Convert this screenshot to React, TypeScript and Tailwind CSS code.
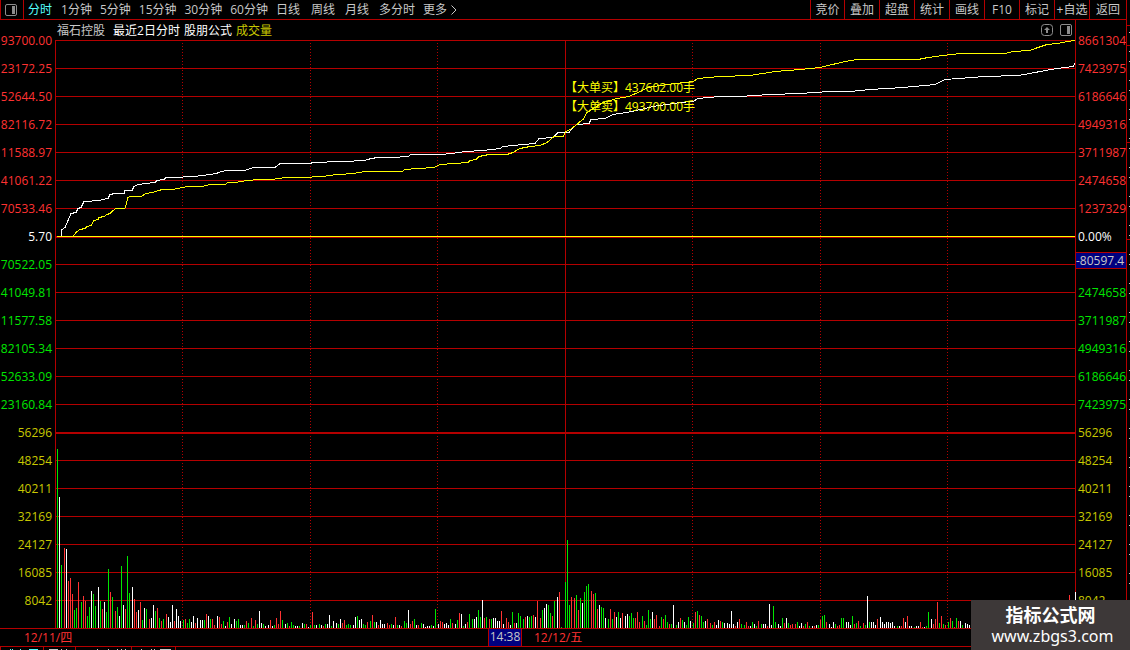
const periods = ["1分钟", "5分钟", "15分钟", "30分钟", "60分钟", "日线"];
const longPeriods = ["周线", "月线", "多分时"];
const tools = ["叠加", "超盘", "统计", "画线", "F10", "标记", "+自选"];

const RED = "text-[#ff3232]";
const GREEN = "text-[#00e600]";
const YELLOW = "text-[#c8c800]";

const leftAxis = [
  { color: RED, values: ["93700.00", "23172.25", "52644.50", "82116.72", "11588.97", "41061.22", "70533.46"] },
  { color: "text-white", values: ["5.70"] },
  { color: GREEN, values: ["70522.05", "41049.81", "11577.58", "82105.34", "52633.09", "23160.84"] },
  { color: YELLOW, values: ["56296", "48254", "40211", "32169", "24127", "16085", "8042"] },
];

const rightAxis = [
  { color: RED, values: ["8661304", "7423975", "6186646", "4949316", "3711987", "2474658", "1237329"] },
  { color: "text-white", values: ["0.00%"] },
  { color: "cursor", values: ["-80597.4"] },
  { color: GREEN, values: ["2474658", "3711987", "4949316", "6186646", "7423975"] },
  { color: YELLOW, values: ["56296", "48254", "40211", "32169", "24127", "16085", "8042"] },
];

// one token per minute: colour (g/r/w) followed by bar height
const volume = `
g179 w131 g63 r80 w79 r47 r50 r34 g18 g20 r46 g26 r32 r27 g12 g21 w37 g34 g22 w41
g27 r19 w26 g16 g59 r36 g31 r17 g21 w12 g62 w23 r19 g72 g35 w41 r29 r16 w18 r26
g8 w20 g19 r9 w10 w23 g17 r20 g10 r7 g9 r14 w11 w6 w23 r7 w19 w12 w7 g8
r9 g5 g9 w6 w12 r5 w10 w8 w8 g8 r14 w12 g9 r9 r3 w12 r11 r4 g7 w2
r6 g11 w4 w9 g7 g9 w3 w3 g3 r7 g5 r10 g2 r8 g4 w17 w5 g4 w2 w3
r8 w2 g3 r10 r4 r17 g8 w4 g5 r2 g6 g3 w2 w2 g2 w5 g4 r4 w1 g3
r16 g3 w3 g4 w3 r2 g4 w4 w13 g2 w7 w5 g4 w9 r5 r8 g3 g4 g3 w3
w11 g12 w8 w9 g4 g3 r6 g7 r13 g6 w6 r3 w8 w4 w4 r5 r3 g4 w3 r11
g3 w3 r2 g7 g5 w18 r4 r7 g9 w3 r3 g5 w4 w1 w2 w2 g3 w2 g19 w4
r7 r6 w4 w5 w3 g9 r5 w4 g8 r15 w14 g2 w4 r6 g14 g9 w9 w11 g18 g11
w28 r10 g11 r9 g9 w10 w10 w7 w7 r17 w4 r10 r6 w3 g16 r5 w5 g15 g12 g9
r11 w12 g11 g12 r13 w11 r27 r10 g18 w20 w24 g23 g15 r12 g27 w31 r36 g1 g0 g46
g88 g23 r31 r30 g33 r18 g30 w25 g36 g42 g44 r37 r34 g35 r19 w23 g21 g20 w10 g9
r19 g9 r16 w11 g16 w10 r15 w12 w14 g12 g15 g10 r10 r16 r6 g12 r7 g3 g18 g9
w16 r9 r13 r2 g11 r9 g13 g6 r4 g4 w23 g3 w6 r10 g8 w6 g3 g11 w7 g5
r16 g17 r13 g12 g6 w7 r9 r5 g3 r6 w3 w8 r7 g6 w5 w5 w4 w17 w4 r2
w6 r9 g4 g3 r6 r2 w2 g6 w4 g2 r7 g4 w4 w4 r2 w24 w3 g22 g6 w4
w2 g10 r5 w10 g5 r3 r4 r4 g6 w2 w5 r2 g4 r6 g2 w2 r2 w3 g3 r8
g12 g13 r6 w4 w1 w6 g4 r2 r3 g10 g10 w6 w6 w3 g12 r4 g5 r7 g2 r5
g3 w32 g6 w6 w6 w3 r9 w11 w6 w4 w6 w6 w5 w6 w2 g2 w2 r2 r10 w6
r12 w2 w2 g1 w2 w2 r6 r1 w1 g2 g16 w9 r4 r9 r26 g5 r12 g4 r3 g6
r10 g7 r1 g10 r7 w7 g3 w5 w4 w3 w2 g3 r4 w2 g5 w3 r2 w4 g3 w2
r5 g3 w4 w2 g6 r3 w3 g2 w4 r5 g3 w2 w3 g4 r3 w5 g2 w3 r4 g3
w4 r3 g5 w4 r6 g4 w5 r4 w6 g5 r7 w4 g6 w5 r8 g6 r33 g0 w0 w36`
  .trim()
  .split(/\s+/);

const whiteLine =
  "61,236 62,229 65,227 68,220 71,213 76,212 78,208 81,207 84,201 100,200 102,199 108,198 110,194 115,193 124,193 125,190 132,190 134,186 138,184 146,183 155,182 157,180 164,179 166,177 173,177 193,176 203,175 210,174 217,173 218,172 226,170 245,170 253,167 275,167 280,163 311,163 312,162 343,161 365,160 367,159 377,157 393,157 408,156 411,154 440,154 452,153 466,151 483,150 500,148 503,146 513,145 535,143 539,138 553,137 558,132 569,132 573,127 577,124 589,123 591,119 605,118 613,114 627,112 645,108 653,106 680,102 693,101 698,98 720,96 740,96 770,94 800,93 830,91 850,91 870,89 903,87 935,84 945,79 985,76 1018,75 1030,73 1040,71 1057,68 1073,66 1075,63";

const yellowLine =
  "73,236 76,232 80,229 85,228 87,226 91,225 94,220 98,219 99,217 104,216 107,214 110,213 112,211 116,208 125,208 128,197 130,196 141,196 146,193 153,192 158,190 163,189 173,189 187,186 202,186 210,184 225,184 228,182 235,182 247,180 260,179 272,179 285,177 302,177 323,176 337,174 355,173 357,172 367,171 402,171 405,169 418,168 434,167 440,164 455,163 468,162 470,160 476,159 479,156 489,154 507,154 513,152 520,148 530,146 540,145 547,142 554,136 563,136 566,131 570,129 577,124 580,121 583,119 587,112 595,107 603,102 617,98 629,96 640,91 648,87 667,84 693,81 698,78 720,76 750,75 775,71 800,69 820,67 845,61 857,59 918,59 928,57 943,55 960,53 1005,53 1013,51 1030,50 1035,48 1047,44 1058,43 1067,41 1075,40";

const barPath = (color: string) =>
  volume
    .map((bar, i) => {
      const height = Number(bar.slice(1));
      if (bar[0] !== color || height === 0) return "";
      return `M${Math.floor(57.625 + i * 2.125) + 0.5} 628v${-height}`;
    })
    .join("");

const gridRows = Array.from({ length: 21 }, (_, i) => 40.5 + i * 28);

function PanelIcon() {
  return (
    <svg width="12" height="12" viewBox="0 0 12 12" fill="none" stroke="#8c8c8c">
      <rect x="0.5" y="0.5" width="11" height="11" rx="1.5" />
      <path d="M7 2h3v8H7z" fill="#8c8c8c" stroke="none" />
    </svg>
  );
}

function Chart() {
  return (
    <div className="relative">
      <svg
        className="relative block h-[589px] w-full overflow-visible"
        viewBox="55 40 1020 589"
        preserveAspectRatio="none"
        shapeRendering="crispEdges"
        fill="none"
      >
        <g stroke="#b40000">
          {gridRows.map((y) => (
            <path key={y} d={`M55 ${y}H1075`} />
          ))}
          <path d="M55 237.5H1075M55 433.5H1075M55.5 40V628M565.5 40V628" />
          <path d="M182.5 43V628M310.5 43V628M437.5 43V628M692.5 43V628M820.5 43V628M947.5 43V628" strokeDasharray="1 2" />
        </g>
        <path d={barPath("g")} stroke="#00e600" />
        <path d={barPath("r")} stroke="#ff3232" />
        <path d={barPath("w")} stroke="#ffffff" />
        <path d="M57 236.5H1075" stroke="#ffff00" />
        <g transform="translate(0 0.5)">
          <polyline points={whiteLine} stroke="#ffffff" />
          <polyline points={yellowLine} stroke="#ffff00" />
        </g>
      </svg>
      <div className="absolute top-[39px] left-1/2 whitespace-nowrap text-[#ffff00]">
        <p className="h-[19px] leading-[18px]">【大单买】437602.00手</p>
        <p className="h-[19px] leading-[18px]">【大单卖】493700.00手</p>
      </div>
    </div>
  );
}

export default function App() {
  return (
    <div className="relative flex min-h-screen overflow-hidden bg-black font-['Open_Sans','Noto_Sans_CJK_SC',sans-serif] text-[12px] leading-[18px] text-[#c8c8c8]">
      <div className="flex min-w-0 flex-1 flex-col">
        <nav className="flex h-5 items-center justify-between border-b border-l border-[#b40000] whitespace-nowrap">
          <div className="flex h-full items-center">
            <button aria-label="侧栏" className="flex h-full w-[23px] items-center justify-center border-r border-[#b40000] pr-0.5">
              <PanelIcon />
            </button>
            <button className="mr-[9px] ml-1 text-[#54ffff]">分时</button>
            <div className="flex gap-2">
              {periods.map((label) => (
                <button key={label}>{label}</button>
              ))}
            </div>
            <div className="ml-[11px] flex gap-[10px]">
              {longPeriods.map((label) => (
                <button key={label}>{label}</button>
              ))}
            </div>
            <button className="ml-2 flex items-center gap-1">
              更多
              <svg width="6" height="10" viewBox="0 0 6 10" fill="none" stroke="#c8c8c8">
                <path d="M0.5 0.5L5 5L0.5 9.5" />
              </svg>
            </button>
          </div>
          <div className="flex h-full">
            <button className="h-full w-[34px] border-l border-[#b40000]">竞价</button>
            {tools.map((label) => (
              <button key={label} className="h-full w-[35px] border-l border-[#b40000]">
                {label}
              </button>
            ))}
            <button className="h-full w-[37px] border-l border-[#b40000]">返回</button>
          </div>
        </nav>

        <main className="flex">
          <div className="w-[55px] shrink-0 overflow-hidden pt-[7px] pr-[3px]">
            {leftAxis.map((group, i) => (
              <div key={i} className={group.color}>
                {group.values.map((value) => (
                  <div key={value} className="flex h-7 items-center justify-end">
                    {value}
                  </div>
                ))}
              </div>
            ))}
          </div>

          <div className="min-w-0 flex-1">
            <div className="flex h-5 items-end justify-between pr-[3px] pl-0.5">
              <div className="flex gap-1">
                <h1 className="mr-1">福石控股</h1>
                <span className="text-white">最近2日分时</span>
                <span className="text-white">股朋公式</span>
                <span className={YELLOW}>成交量</span>
              </div>
              <div className="flex gap-[7px] pb-1">
                <svg width="12" height="12" viewBox="0 0 12 12" fill="none" stroke="#8c8c8c">
                  <rect x="0.5" y="0.5" width="11" height="11" rx="3" />
                  <path d="M6 3L9 6H7V9H5V6H3z" fill="#8c8c8c" stroke="none" />
                </svg>
                <PanelIcon />
              </div>
            </div>
            <Chart />
          </div>

          <div className="w-[51px] shrink-0 overflow-hidden border-l border-[#b40000] pt-[7px]">
            {rightAxis.map((group, i) =>
              group.color === "cursor" ? (
                <div key={i} className="h-7 pt-px">
                  <div className="h-[17px] border-y border-[#b40000] bg-[#000080] leading-[15px]">{group.values[0]}</div>
                </div>
              ) : (
                <div key={i} className={group.color}>
                  {group.values.map((value) => (
                    <div key={value} className="flex h-7 items-center pl-0.5">
                      {value}
                    </div>
                  ))}
                </div>
              ),
            )}
          </div>
        </main>

        <div className="-mt-px flex h-[19px] border-y border-[#b40000] pr-[82px] pl-6 text-[#ff3232]">
          <div className="flex w-1/2 justify-between">
            <span>12/11/四</span>
            <span className="mr-3 w-[34px] border-x border-[#b40000] bg-[#000080] text-center leading-4 text-[#c8c8c8]">
              14:38
            </span>
          </div>
          <span className="w-1/2">12/12/五</span>
        </div>

        <svg className="block" width="180" height="3" viewBox="0 0 180 3" shapeRendering="crispEdges" fill="none">
          <path d="M0.5 0v3M43.5 0v3M75.5 0v3M131.5 0v3M175.5 0v3" stroke="#b40000" />
          <path d="M10 2.5h1M12 2.5h1M20 2.5h1M29 2.5h9" stroke="#54ffff" />
          <path
            d="M49 2.5h9M61 2.5h1M66 2.5h1M97 2.5h1M108 2.5h1M117 2.5h1M121 2.5h1M125 2.5h1M141 2.5h1M151 2.5h1M154 2.5h1M160 2.5h11"
            stroke="#c8c8c8"
          />
        </svg>
      </div>

      <div className="w-1 shrink-0 border-l border-[#b40000]">
        <svg className="block" width="3" height="600" viewBox="0 0 3 600" shapeRendering="crispEdges" fill="none">
          <path d="M0 25.5h3M0 45.5h3M0 142.5h3M0 239.5h3" stroke="#b40000" />
          <path d="M2.5 32v600" stroke="#c8c8c8" strokeDasharray="1 18 1 9" />
        </svg>
      </div>

      <div className="absolute right-0 bottom-0 h-[50px] w-[159px] bg-[#3d3838] pt-1 text-center text-white">
        <p className="text-[18px] leading-[22px] font-bold">指标公式网</p>
        <p className="pl-1 font-['Noto_Sans'] text-[16px] leading-5">www.zbgs3.com</p>
      </div>
    </div>
  );
}
